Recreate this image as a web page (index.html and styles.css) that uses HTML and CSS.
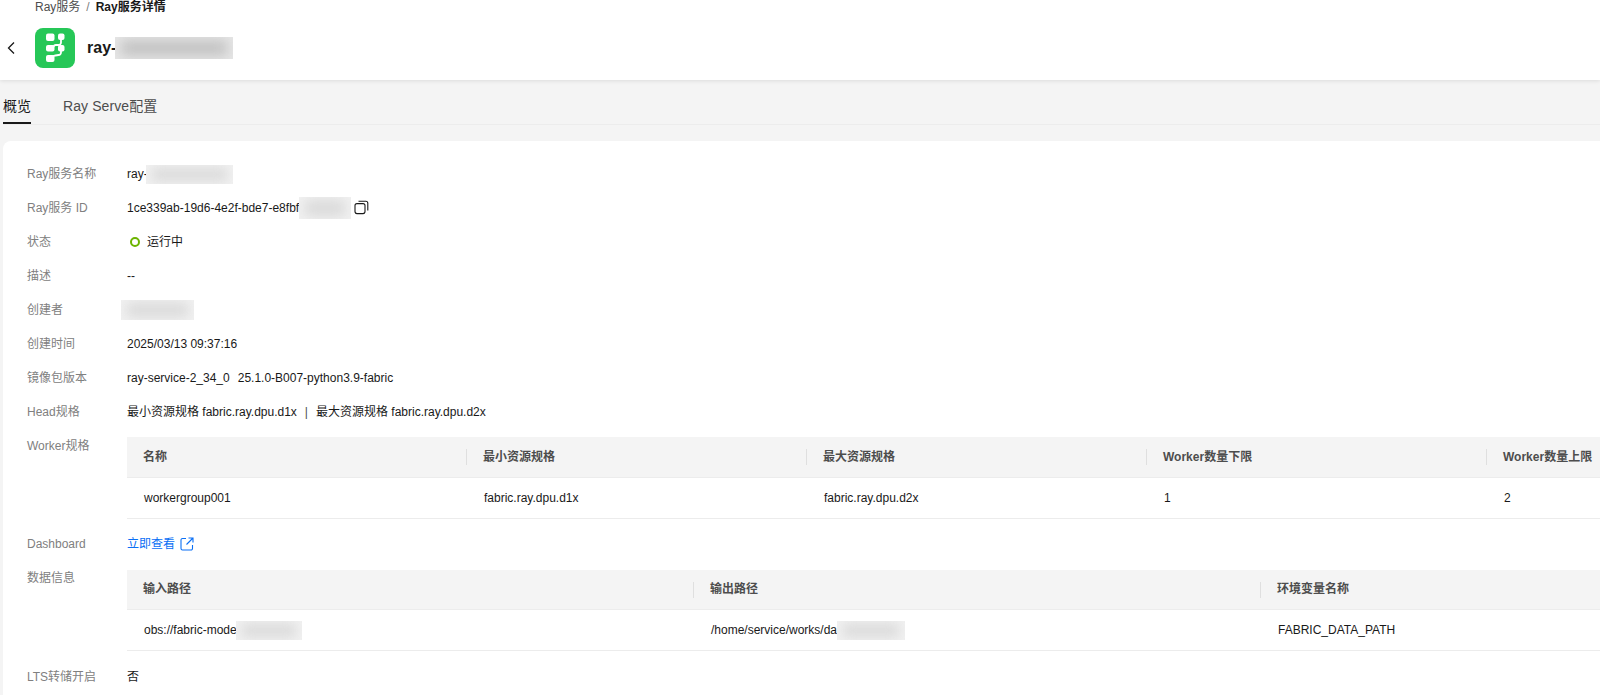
FILE: index.html
```html
<!DOCTYPE html>
<html lang="zh-CN">
<head>
<meta charset="utf-8">
<title>Ray服务详情</title>
<link rel="stylesheet" href="styles.css">
</head>
<body>
<header class="head">
  <nav class="crumbs"><span>Ray服务</span><span class="sep">/</span><b>Ray服务详情</b></nav>
  <div class="title-row">
    <svg class="back" width="10" height="14" viewBox="0 0 10 14"><path d="M8 1.500 2.500 7 8 12.500" fill="none" stroke="#191919" stroke-width="1.300"/></svg>
    <svg class="logo" width="40" height="40" viewBox="0 0 40 40">
      <rect width="40" height="40" rx="8" fill="#26c757"/>
      <rect x="11" y="5.500" width="8.500" height="7.500" rx="2" fill="#fff"/>
      <rect x="23" y="5.500" width="6.500" height="6.500" rx="2" fill="#fff"/>
      <rect x="11" y="17" width="8.500" height="6.500" rx="2" fill="#fff"/>
      <rect x="23" y="17" width="6.500" height="6.500" rx="2" fill="#fff"/>
      <rect x="11" y="27" width="8.500" height="7" rx="2" fill="#fff"/>
      <path d="M26 11v3.500a2.500 2.500 0 0 1-2.500 2.500h-2.500a2.500 2.500 0 0 0-2.500 2M26 23v1.500a2.500 2.500 0 0 1-2.500 2.500l-3 .5a3 3 0 0 0-3 2" fill="none" stroke="#fff" stroke-width="1.800"/>
    </svg>
    <h1 class="title"><span>ray-</span><span class="blur blur-title"></span></h1>
  </div>
</header>
<div class="tabs">
  <span class="tab active">概览</span>
  <span class="tab">Ray Serve配置</span>
</div>
<main class="card">
  <dl class="rows">
    <div class="row"><dt>Ray服务名称</dt><dd class="inline">ray-<span class="blur blur-name"></span></dd></div>
    <div class="row"><dt>Ray服务 ID</dt><dd class="inline">1ce339ab-19d6-4e2f-bde7-e8fbf<span class="blur blur-id"></span>
      <svg class="copy" width="15" height="15" viewBox="0 0 15 15"><rect x="1" y="3.600" width="10" height="10" rx="2" fill="none" stroke="#191919" stroke-width="1.100"/><path d="M4.500 1.200h7.300a2 2 0 0 1 2 2v7.300" fill="none" stroke="#191919" stroke-width="1.100"/></svg></dd></div>
    <div class="row"><dt>状态</dt><dd class="inline status"><i class="dot"></i>运行中</dd></div>
    <div class="row"><dt>描述</dt><dd>--</dd></div>
    <div class="row"><dt>创建者</dt><dd class="inline"><span class="blur blur-user"></span></dd></div>
    <div class="row"><dt>创建时间</dt><dd>2025/03/13 09:37:16</dd></div>
    <div class="row"><dt>镜像包版本</dt><dd class="inline"><span>ray-service-2_34_0</span><span class="gap-version">25.1.0-B007-python3.9-fabric</span></dd></div>
    <div class="row"><dt>Head规格</dt><dd class="inline"><span>最小资源规格 fabric.ray.dpu.d1x</span><span class="pipe">|</span><span>最大资源规格 fabric.ray.dpu.d2x</span></dd></div>
    <div class="row first-table"><dt>Worker规格</dt><dd>
      <table class="tbl five">
        <thead><tr><th>名称</th><th>最小资源规格</th><th>最大资源规格</th><th>Worker数量下限</th><th>Worker数量上限</th></tr></thead>
        <tbody><tr><td>workergroup001</td><td>fabric.ray.dpu.d1x</td><td>fabric.ray.dpu.d2x</td><td>1</td><td>2</td></tr></tbody>
      </table></dd></div>
    <div class="row row-link"><dt>Dashboard</dt><dd class="inline"><a class="link" href="#">立即查看<svg width="14" height="14" viewBox="0 0 14 14"><path d="M6 1.500H2.500a1.500 1.500 0 0 0-1.500 1.500v8.500A1.500 1.500 0 0 0 2.500 13h8.500a1.500 1.500 0 0 0 1.500-1.500V8M8.500 1h4.500v4.500M13 1 6.500 7.500" fill="none" stroke="#0a6ff5" stroke-width="1.100"/></svg></a></dd></div>
    <div class="row"><dt>数据信息</dt><dd>
      <table class="tbl three">
        <thead><tr><th>输入路径</th><th>输出路径</th><th>环境变量名称</th></tr></thead>
        <tbody><tr><td><span class="cell">obs://fabric-mode<span class="blur blur-in"></span></span></td><td><span class="cell">/home/service/works/da<span class="blur blur-out"></span></span></td><td>FABRIC_DATA_PATH</td></tr></tbody>
      </table></dd></div>
    <div class="row"><dt>LTS转储开启</dt><dd>否</dd></div>
  </dl>
</main>
</body>
</html>
```

FILE: styles.css
```css
* { box-sizing: border-box; }
html, body { margin: 0; height: 695px; overflow: hidden; }
body {
  background: #f4f4f4;
  color: #191919;
  font: 12px/16px "Liberation Sans", "Noto Sans CJK SC", sans-serif;
}
.head {
  height: 80px;
  background: #fff;
  box-shadow: 0 1px 4px rgba(0, 0, 0, .1);
  position: relative;
  padding-left: 35px;
}
.crumbs { height: 14px; display: flex; align-items: center; gap: 6px; color: #4d4d4d; }
.crumbs b { color: #191919; }
.sep { color: #808080; }
.title-row { display: flex; align-items: center; margin-top: 14px; height: 40px; }
.back { margin-left: -29px; margin-right: 19px; margin-top: -1px; }
.logo { flex: none; }
.title { margin: 0 0 0 12px; font-size: 16px; line-height: 22px; font-weight: 700; display: flex; align-items: center; }
.tabs {
  height: 45px;
  margin-left: 3px;
  border-bottom: 1px solid #ececec;
  display: flex;
  gap: 32px;
}
.tab { height: 44px; padding-top: 17px; font-size: 14px; line-height: 18px; color: #4d4d4d; letter-spacing: .1px; }
.tab.active { color: #191919; border-bottom: 2px solid #191919; letter-spacing: 0; }
.card {
  margin: 16px 0 0 3px;
  background: #fff;
  border-radius: 8px 0 0 0;
  height: 560px;
  padding: 25px 0 0 24px;
  overflow: hidden;
}
.rows { margin: 0; }
.row { display: flex; margin-bottom: 18px; }
.row dt { width: 100px; flex: none; color: #808080; }
.row dd { margin: 0; min-width: 0; }
.inline { display: flex; align-items: center; height: 16px; white-space: nowrap; }
.status .dot { width: 10px; height: 10px; margin: 0 7px 0 3px; border: 2.5px solid #6cb400; border-radius: 50%; }
.copy { margin-left: 3px; margin-top: -1px; }
.gap-version { margin-left: 8px; }
.pipe { margin: 0 8px; color: #4d4d4d; font-weight: 400; }
.blur { display: inline-block; background: #f1f1f1; position: relative; overflow: hidden; flex: none; }
.blur::before {
  content: "";
  position: absolute;
  inset: 3px 6px;
  background: #dadada;
  filter: blur(6px);
}
.title .blur { background: #e6e6e6; }
.title .blur::before { background: #c4c4c4; }
.blur-title { width: 118px; height: 22px; margin-left: -1px; }
.blur-name { width: 87px; height: 19px; margin-left: -2px; }
.blur-id { width: 52px; height: 22px; }
.blur-user { width: 73px; height: 20px; margin-left: -6px; }
.cell { display: flex; align-items: center; white-space: nowrap; }
.blur-in { width: 66px; height: 19px; margin-left: -1px; }
.blur-out { width: 68px; height: 19px; }
.first-table { margin-bottom: 17px; }
.first-table dd { margin-top: -1px; }
.link { display: flex; align-items: center; gap: 5px; color: #0a6ff5; text-decoration: none; }
.tbl { border-collapse: collapse; table-layout: fixed; }
.five { width: 1700px; }
.three { width: 1701px; }
.tbl th {
  height: 40px;
  padding: 0 16px;
  background: #f4f4f4;
  color: #4d4d4d;
  font-weight: 700;
  text-align: left;
  position: relative;
  border-bottom: 1px solid #ececec;
}
.tbl th + th::before {
  content: "";
  position: absolute;
  left: -1px;
  top: 12px;
  height: 16px;
  width: 1px;
  background: #dfdfdf;
}
.tbl td {
  height: 41px;
  padding: 0 17px;
  border-bottom: 1px solid #ececec;
}
```
